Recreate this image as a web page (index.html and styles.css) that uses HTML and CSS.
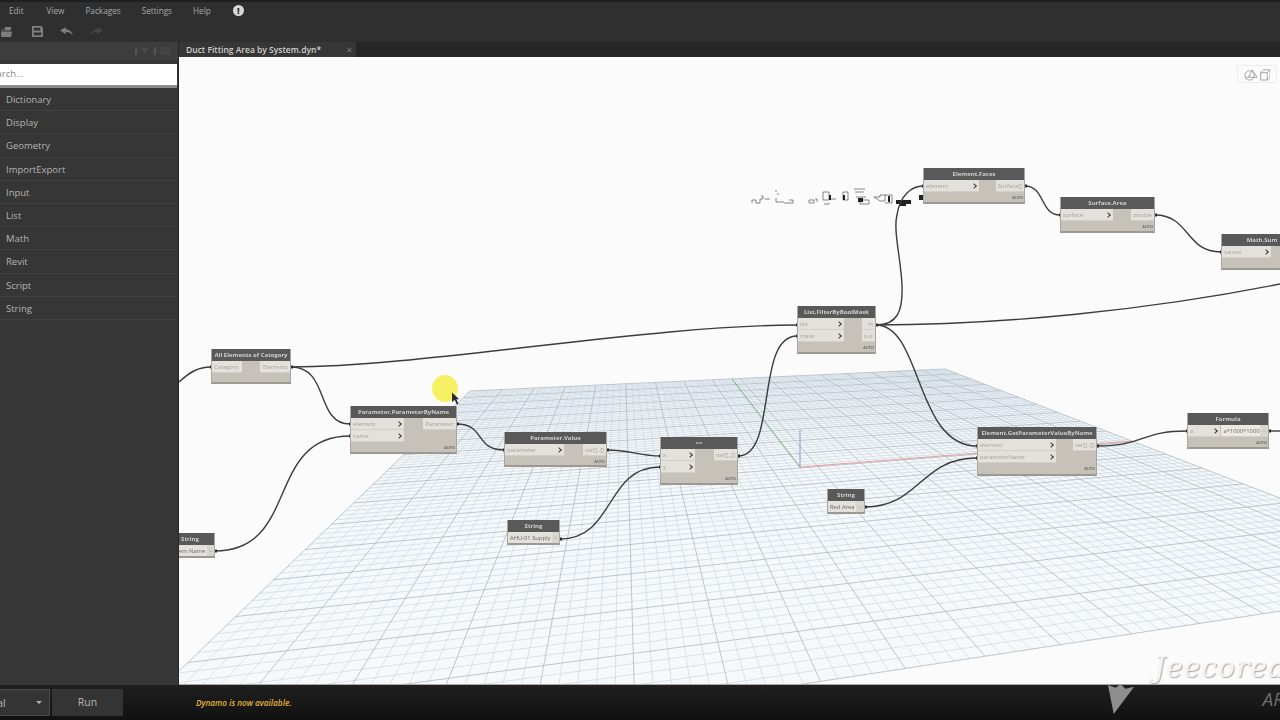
FILE: index.html
```html
<!DOCTYPE html>
<html lang="en">
<head>
    <meta charset="UTF-8">
    <title>Dynamo</title>
    <link rel="stylesheet" href="styles.css">
</head>
<body>
<div class="app">
    <div class="menubar">
        <span class="menu-item menu-edit">Edit</span>
        <span class="menu-item menu-view">View</span>
        <span class="menu-item menu-packages">Packages</span>
        <span class="menu-item menu-settings">Settings</span>
        <span class="menu-item menu-help">Help</span>
        <span class="alert">!</span>
    </div>

    <div class="toolbar">
        <svg class="tool tool-open" viewBox="0 0 14 12"><path d="M0 4h4V1h7v3h-1v1H0zM0 6h12l-1 6H0z"/></svg>
        <svg class="tool tool-save" viewBox="0 0 12 12"><path fill-rule="evenodd" d="M0 0h10l2 2v10H0zM2 2v3h7V2zM2 7v3h8V7z"/></svg>
        <svg class="tool tool-undo" viewBox="0 0 14 10"><path d="M0 4l6-4v2.500c4 0 7 2.500 8 7-2-3-4-4-8-4V8z"/></svg>
        <svg class="tool tool-redo" viewBox="0 0 14 10"><path d="M14 4L8 0v2.500c-4 0-7 2.500-8 7 2-3 4-4 8-4V8z"/></svg>
    </div>

    <div class="main">
        <aside class="library">
            <div class="library-head">
                <svg class="library-icons" viewBox="0 0 40 10">
                    <path d="M3 1v8M22 1v8" stroke="#6e6e6e" fill="none"/>
                    <path d="M8.500 2h7L12 8z" fill="#4c4c4c"/>
                    <path d="M27 2h10M27 4h10M27 6h10M27 8h10" stroke="#4c4c4c" fill="none"/>
                </svg>
            </div>
            <div class="search"><span class="search-text">Search...</span></div>
            <ul class="categories">
                <li>Dictionary</li>
                <li>Display</li>
                <li>Geometry</li>
                <li>ImportExport</li>
                <li>Input</li>
                <li>List</li>
                <li>Math</li>
                <li>Revit</li>
                <li>Script</li>
                <li>String</li>
            </ul>
        </aside>

        <div class="workspace">
            <div class="tabs">
                <div class="tab">
                    <span class="tab-name">Duct Fitting Area by System.dyn*</span>
                    <span class="tab-close">✕</span>
                </div>
            </div>

            <div class="canvas">
                <svg class="scene" viewBox="179 57 1101 628">
                    <g id="grid"></g>
                    <path class="axis axis-green" d="M800 467L732 379"/>
                    <path class="axis axis-blue" d="M800 467V430"/>
                    <path class="axis axis-red" d="M800 467L1132 441"/>
                    <g class="artifact">
                        <path d="M752 203v-3h4v3h4v-4h3v-3h-2M765 199h5M776 190v2M778 193v2M776 198v4h8M784 203h9v-3h-4M809 200h5v3h-5zM815 199h2v3M823 192h6v8h-6zM829 199h7M824 204h5v-1M843 192h5v8h-5zM854 189h11M855 192h9M856 197h10M860 200h9v4h-9zM874 197h6v-2h5v6h-5zM885 195h7v8h-7"/>
                        <path class="artifact-solid" d="M896 200h15v4h-5v2h-6v-2h-4zM919 195h4v5h-4zM858 198h5v4h-5zM829 195h2v5h-2zM843 195h2v5h-2zM888 196h2v6h-2z"/>
                    </g>
                    <g class="wires">
                        <path d="M179 382C190 372 198 367 211 367"/>
                        <path d="M291 367C420 367 650 325 797 325"/>
                        <path d="M291 367C330 367 315 424 350 424"/>
                        <path d="M215 551C300 551 265 436 350 436"/>
                        <path d="M457 424C485 424 475 450 504 450"/>
                        <path d="M607 450C630 450 640 456 660 456"/>
                        <path d="M560 539C615 539 605 467 660 467"/>
                        <path d="M738 456C778 456 755 336 797 336"/>
                        <path d="M876 325C898 325 903 310 902 285C901 260 893 230 897 215C900 195 912 186 923 186"/>
                        <path d="M876 325C922 325 915 446 977 446"/>
                        <path d="M876 325C1000 325 1150 310 1280 284"/>
                        <path d="M865 507C920 507 920 458 977 458"/>
                        <path d="M1097 446C1145 446 1140 431 1187 431"/>
                        <path d="M1025 186C1045 186 1040 215 1060 215"/>
                        <path d="M1155 215C1190 215 1185 252 1221 252"/>
                        <path d="M1269 431H1280"/>
                    </g>
                    <path class="port-dots" d="M210 367h2M291 367h2M349 424h2M349 436h2M215 551h2M457 424h2M503 450h2M607 450h2M659 456h2M659 467h2M560 539h2M738 456h2M796 325h2M796 336h2M876 325h2M922 186h2M976 446h2M976 458h2M865 507h2M1097 446h2M1186 431h2M1269 431h2M1025 186h2M1059 215h2M1155 215h2M1220 252h2"/>
                </svg>

                <div class="node node-category">
                    <div class="node-title">All Elements of Category</div>
                    <div class="node-ports">
                        <div><div class="port port-in">Category</div></div>
                        <div><div class="port port-out">Elements</div></div>
                    </div>
                    <div class="node-foot"></div>
                </div>

                <div class="node node-byname">
                    <div class="node-title">Parameter.ParameterByName</div>
                    <div class="node-ports">
                        <div>
                            <div class="port port-in">element<i class="chev"></i></div>
                            <div class="port port-in">name<i class="chev"></i></div>
                        </div>
                        <div><div class="port port-out">Parameter</div></div>
                    </div>
                    <div class="node-foot">AUTO</div>
                </div>

                <div class="node node-value">
                    <div class="node-title">Parameter.Value</div>
                    <div class="node-ports">
                        <div><div class="port port-in">parameter<i class="chev"></i></div></div>
                        <div><div class="port port-out">var[]..[]</div></div>
                    </div>
                    <div class="node-foot">AUTO</div>
                </div>

                <div class="node node-equals">
                    <div class="node-title">==</div>
                    <div class="node-ports">
                        <div>
                            <div class="port port-in">x<i class="chev"></i></div>
                            <div class="port port-in">y<i class="chev"></i></div>
                        </div>
                        <div><div class="port port-out">var[]..[]</div></div>
                    </div>
                    <div class="node-foot">AUTO</div>
                </div>

                <div class="node node-filter">
                    <div class="node-title">List.FilterByBoolMask</div>
                    <div class="node-ports">
                        <div>
                            <div class="port port-in">list<i class="chev"></i></div>
                            <div class="port port-in">mask<i class="chev"></i></div>
                        </div>
                        <div>
                            <div class="port port-out">in</div>
                            <div class="port port-out">out</div>
                        </div>
                    </div>
                    <div class="node-foot">AUTO</div>
                </div>

                <div class="node node-faces">
                    <div class="node-title">Element.Faces</div>
                    <div class="node-ports">
                        <div><div class="port port-in">element<i class="chev"></i></div></div>
                        <div><div class="port port-out">Surface[]</div></div>
                    </div>
                    <div class="node-foot">AUTO</div>
                </div>

                <div class="node node-area">
                    <div class="node-title">Surface.Area</div>
                    <div class="node-ports">
                        <div><div class="port port-in">surface<i class="chev"></i></div></div>
                        <div><div class="port port-out">double</div></div>
                    </div>
                    <div class="node-foot">AUTO</div>
                </div>

                <div class="node node-sum">
                    <div class="node-title">Math.Sum</div>
                    <div class="node-ports">
                        <div><div class="port port-in">values<i class="chev"></i></div></div>
                    </div>
                    <div class="node-foot"></div>
                </div>

                <div class="node node-getparam">
                    <div class="node-title">Element.GetParameterValueByName</div>
                    <div class="node-ports">
                        <div>
                            <div class="port port-in">element<i class="chev"></i></div>
                            <div class="port port-in">parameterName<i class="chev"></i></div>
                        </div>
                        <div><div class="port port-out">var[]..[]</div></div>
                    </div>
                    <div class="node-foot">AUTO</div>
                </div>

                <div class="node node-formula">
                    <div class="node-title">Formula</div>
                    <div class="node-ports node-ports-tight">
                        <div class="port port-in">a<i class="chev"></i></div>
                        <div class="port port-code">a*1000*1000</div>
                        <div class="port port-arrow">&gt;</div>
                    </div>
                    <div class="node-foot">AUTO</div>
                </div>

                <div class="node node-string node-red">
                    <div class="node-title">String</div>
                    <div class="node-ports node-ports-tight">
                        <div class="port port-text">Red Area</div>
                        <div class="port port-arrow">&gt;</div>
                    </div>
                </div>

                <div class="node node-string node-ahu">
                    <div class="node-title">String</div>
                    <div class="node-ports node-ports-tight">
                        <div class="port port-text">AHU-01 Supply</div>
                        <div class="port port-arrow">&gt;</div>
                    </div>
                </div>

                <div class="node node-string node-system">
                    <div class="node-title">String</div>
                    <div class="node-ports node-ports-tight">
                        <div class="port port-text">System Name</div>
                        <div class="port port-arrow">&gt;</div>
                    </div>
                </div>

                <div class="view-switch">
                    <svg viewBox="0 0 28 14">
                        <circle cx="6" cy="8" r="5"/>
                        <path d="M9 2l5 8H5zM1 12L6 8"/>
                        <path d="M18 5h7v8h-7zM18 5l3-3h7v8l-3 3M25 5l3-3"/>
                    </svg>
                </div>

                <div class="highlight"></div>
                <svg class="cursor" viewBox="0 0 10 15"><path d="M0 0l9 8.500H5.500L8 14l-2 1-2.500-5.500L0 12z"/></svg>
            </div>
        </div>
    </div>

    <div class="statusbar">
        <div class="run-mode"><span class="run-mode-name">Manual</span><span class="caret"></span></div>
        <div class="run-button">Run</div>
        <div class="status-text">Dynamo is now available.</div>
    </div>

    <div class="watermark">
        <svg class="mark-shape" viewBox="0 0 30 34"><path d="M1 4l8 3 5-4 5 5 9-2-21 28z"/></svg>
        <span class="mark-name">Jeecorea</span>
        <span class="mark-sub">AR</span>
    </div>
</div>
<script src="grid.js"></script>
</body>
</html>
```

FILE: styles.css
```css
* {
    box-sizing: border-box;
}

body {
    margin: 0;
    background-color: #1a1a1a;
    font-family: "Open Sans", "Liberation Sans", sans-serif;
}

.app {
    position: relative;
    display: flex;
    flex-direction: column;
    width: 1280px;
    height: 720px;
    overflow: hidden;
}

/* menu and toolbar */
.menubar {
    display: flex;
    align-items: center;
    height: 22px;
    padding-bottom: 3px;
    background-color: #2f2f2f;
    border-top: 2px solid #1f1f1f;
}

.menu-item {
    font-size: 8.200px;
    color: #a9a9a9;
}

.menu-edit { margin-left: 9px; }
.menu-view { margin-left: 23px; }
.menu-packages { margin-left: 21px; }
.menu-settings { margin-left: 21px; }
.menu-help { margin-left: 21px; }

.alert {
    display: flex;
    align-items: center;
    justify-content: center;
    width: 11px;
    height: 11px;
    margin-left: 22px;
    border-radius: 50%;
    background-color: #d8d8d8;
    color: #2f2f2f;
    font-size: 9px;
    font-weight: 800;
}

.toolbar {
    display: flex;
    align-items: center;
    height: 20px;
    padding-bottom: 2px;
    background-color: #2f2f2f;
}

.tool {
    fill: #7e7e7e;
}

.tool-open { width: 13px; height: 11px; margin-left: 1px; }
.tool-save { width: 11px; height: 11px; margin-left: 18px; }
.tool-undo { width: 13px; height: 9px; margin-left: 17px; }
.tool-redo { width: 13px; height: 9px; margin-left: 17px; fill: #464646; }

.main {
    display: flex;
    flex: 1;
    min-height: 0;
}

/* library */
.library {
    width: 179px;
    background-color: #363636;
    border-right: 1px solid #262626;
}

.library-head {
    display: flex;
    justify-content: flex-end;
    align-items: center;
    height: 18px;
    padding-right: 5px;
    background-color: #3d3d3d;
}

.library-icons {
    width: 40px;
    height: 10px;
}

.search {
    height: 24px;
    margin: 4px 1px 0 0;
    padding-left: 1px;
    background-color: #fff;
    border-bottom: 3px solid #8c8c8c;
    overflow: hidden;
}

.search-text {
    display: block;
    margin-left: -15px;
    font-size: 9.500px;
    line-height: 20px;
    color: #8c8c8c;
}

.categories {
    margin: 0;
    padding: 0;
    list-style: none;
}

.categories li {
    height: 23.200px;
    margin-right: 2px;
    padding-left: 6px;
    border-bottom: 1px solid #414141;
    font-size: 9.500px;
    line-height: 23px;
    color: #b4b4b4;
}

/* tabs */
.workspace {
    display: flex;
    flex: 1;
    flex-direction: column;
    min-width: 0;
}

.tabs {
    display: flex;
    height: 15px;
    background-color: #262626;
}

.tab {
    display: flex;
    justify-content: space-between;
    align-items: center;
    width: 177px;
    padding: 0 3px 0 7px;
    background-color: #363636;
}

.tab-name {
    font-size: 8.500px;
    font-weight: 600;
    color: #d0d0d0;
}

.tab-close {
    font-size: 8px;
    color: #777;
}

/* graph canvas */
.canvas {
    position: relative;
    flex: 1;
    overflow: hidden;
    background-color: #fbfbfb;
    border-bottom: 1px solid #a8a8a8;
    filter: blur(0.300px);
}

.scene {
    position: absolute;
    top: 0;
    left: 0;
    width: 1101px;
    height: 628px;
}

.plane {
    fill: #f6f9fb;
}

.grid-minor {
    stroke: #cbd8e1;
    stroke-width: 0.700;
    fill: none;
}

.grid-major {
    stroke: #aeb9c2;
    stroke-width: 0.800;
    fill: none;
}

.axis {
    fill: none;
    stroke-width: 0.800;
}

.axis-green { stroke: #5d9a63; }
.axis-blue { stroke: #7878d8; }
.axis-red { stroke: #e58a8c; }

.artifact path {
    fill: none;
    stroke: #555;
    stroke-width: 0.700;
}

.artifact .artifact-solid {
    fill: #222;
    stroke: none;
}

.wires path {
    fill: none;
    stroke: #3c3c3c;
    stroke-width: 1.400;
}

.port-dots {
    fill: none;
    stroke: #2c2c2c;
    stroke-width: 3;
}

/* nodes */
.node {
    position: absolute;
    background-color: #c6c2ba;
    border: 1px solid #a9a69f;
    border-top: 0;
    border-bottom: 2px solid #9c9992;
    overflow: hidden;
}

.node-title {
    height: 12px;
    background-color: #595959;
    font-size: 6px;
    font-weight: 700;
    line-height: 12px;
    text-align: center;
    white-space: nowrap;
    color: #d0d0d0;
}

.node-ports {
    display: flex;
    justify-content: space-between;
}

.port {
    display: flex;
    justify-content: space-between;
    align-items: center;
    height: 12px;
    padding: 0 2px;
    background-color: #e4e1dc;
    border-bottom: 1px solid #d2cfc8;
    font-size: 5.800px;
    white-space: nowrap;
    color: #a5a29b;
}

.chev {
    width: 4px;
    height: 4px;
    margin-right: 1px;
    border-top: 1.300px solid #3a3a3a;
    border-right: 1.300px solid #3a3a3a;
    transform: rotate(45deg);
}

.port-out {
    justify-content: flex-end;
    margin-left: auto;
}

.node-ports-tight {
    justify-content: flex-start;
}

.port-code {
    width: 39px;
    margin-left: 1px;
    color: #666;
    background-color: #ece9e4;
}

.port-arrow {
    width: 8px;
    padding: 0;
    justify-content: center;
    background-color: #d9d6d0;
}

.port-text {
    flex: 1;
    color: #6a6a6a;
}

.node-foot {
    height: 10px;
    padding: 3px 1px 0 0;
    font-size: 3.800px;
    font-weight: 700;
    text-align: right;
    color: #6c6c6c;
}

.node-category { left: 32px; top: 292px; width: 80px; height: 35px; }
.node-category .port { width: 30px; }
.node-category .port-out { width: 30px; }

.node-byname { left: 171px; top: 349px; width: 107px; height: 48px; }
.node-byname .port-in { width: 53px; }

.node-value { left: 325px; top: 375px; width: 103px; height: 35px; }
.node-value .port-in { width: 59px; }

.node-equals { left: 481px; top: 380px; width: 78px; height: 48px; }
.node-equals .port-in { width: 34px; }

.node-filter { left: 618px; top: 249px; width: 79px; height: 48px; }
.node-filter .port-in { width: 46px; }

.node-faces { left: 744px; top: 111px; width: 102px; height: 36px; }
.node-faces .port-in { width: 55px; }

.node-area { left: 881px; top: 140px; width: 95px; height: 36px; }
.node-area .port-in { width: 52px; }

.node-sum { left: 1042px; top: 177px; width: 82px; height: 36px; }
.node-sum .port-in { width: 49px; }

.node-getparam { left: 798px; top: 370px; width: 120px; height: 49px; }
.node-getparam .port-in { width: 78px; }

.node-formula { left: 1008px; top: 356px; width: 82px; height: 36px; }
.node-formula .port-in { width: 34px; }

.node-string { height: 25px; }
.node-red { left: 648px; top: 432px; width: 38px; }
.node-ahu { left: 328px; top: 463px; width: 53px; }
.node-system { left: -14px; top: 476px; width: 50px; }

.view-switch {
    position: absolute;
    top: 8px;
    right: 3px;
    width: 40px;
    height: 18px;
    padding: 2px 6px;
    border: 1px solid #ececec;
    border-radius: 2px;
}

.view-switch svg {
    display: block;
    width: 26px;
    height: 13px;
    fill: none;
    stroke: #8d8d8d;
    stroke-width: 0.800;
}

.highlight {
    position: absolute;
    left: 253px;
    top: 318px;
    width: 26px;
    height: 27px;
    border-radius: 50%;
    background-color: #f6f162;
}

.cursor {
    position: absolute;
    left: 273px;
    top: 335px;
    width: 8px;
    height: 13px;
    fill: #2a2a2a;
}

/* bottom bar */
.statusbar {
    display: flex;
    align-items: center;
    height: 35px;
    background: linear-gradient(#1f1f1f, #111);
}

.run-mode {
    display: flex;
    justify-content: space-between;
    align-items: center;
    width: 50px;
    height: 27px;
    padding-right: 7px;
    background-color: #343434;
    border: 1px solid #4a4a4a;
    border-left: 0;
    overflow: hidden;
}

.run-mode-name {
    margin-left: -31px;
    font-size: 10.500px;
    color: #b4b4b4;
}

.caret {
    border-top: 3px solid #b4b4b4;
    border-left: 3px solid transparent;
    border-right: 3px solid transparent;
}

.run-button {
    width: 71px;
    height: 27px;
    margin-left: 2px;
    background-color: #343434;
    font-size: 10.500px;
    line-height: 26px;
    text-align: center;
    color: #b4b4b4;
}

.status-text {
    margin-left: 73px;
    font-size: 8.200px;
    font-weight: 600;
    font-style: italic;
    color: #e3b53a;
}

/* logo burned into the video, lies over everything */
.watermark {
    position: absolute;
    left: 1100px;
    top: 645px;
    width: 180px;
    height: 75px;
    overflow: hidden;
}

.mark-shape {
    position: absolute;
    left: 7px;
    top: 36px;
    width: 29px;
    height: 33px;
    fill: #8e8e8e;
}

.mark-name {
    position: absolute;
    left: 54px;
    top: 6px;
    font-family: "DejaVu Serif", serif;
    font-size: 28px;
    font-style: italic;
    letter-spacing: 1px;
    white-space: nowrap;
    color: #f4f4f4;
    text-shadow: 1px 1px 1px #a8a8a8;
}

.mark-sub {
    position: absolute;
    right: -4px;
    top: 41px;
    font-size: 19px;
    font-style: italic;
    color: #6e6e6e;
}
```

FILE: grid.js
```js
// Perspective floor grid, drawn from the four corners of the plane
const corners = [[470, 391], [945, 369], [1490, 579], [45, 800]];
const cells = 85;
const majorEvery = 5;

const [p0, p1, p2, p3] = corners;
const dx1 = p1[0] - p2[0], dx2 = p3[0] - p2[0], dx3 = p0[0] - p1[0] + p2[0] - p3[0];
const dy1 = p1[1] - p2[1], dy2 = p3[1] - p2[1], dy3 = p0[1] - p1[1] + p2[1] - p3[1];
const den = dx1 * dy2 - dx2 * dy1;
const g = (dx3 * dy2 - dx2 * dy3) / den;
const h = (dx1 * dy3 - dx3 * dy1) / den;

function project(u, v) {
    const w = g * u + h * v + 1;
    return [
        (((p1[0] - p0[0] + g * p1[0]) * u + (p3[0] - p0[0] + h * p3[0]) * v + p0[0]) / w).toFixed(1),
        (((p1[1] - p0[1] + g * p1[1]) * u + (p3[1] - p0[1] + h * p3[1]) * v + p0[1]) / w).toFixed(1)
    ];
}

let minor = '';
let major = '';
for (let i = 0; i <= cells; i++) {
    const t = i / cells;
    const across = 'M' + project(0, t) + 'L' + project(1, t);
    const depth = 'M' + project(t, 0) + 'L' + project(t, 1);
    if (i % majorEvery === 0) {
        major += across + depth;
    } else {
        minor += across + depth;
    }
}

document.getElementById('grid').innerHTML =
    '<polygon class="plane" points="' + corners.join(' ') + '"/>' +
    '<path class="grid-minor" d="' + minor + '"/>' +
    '<path class="grid-major" d="' + major + '"/>';
```
